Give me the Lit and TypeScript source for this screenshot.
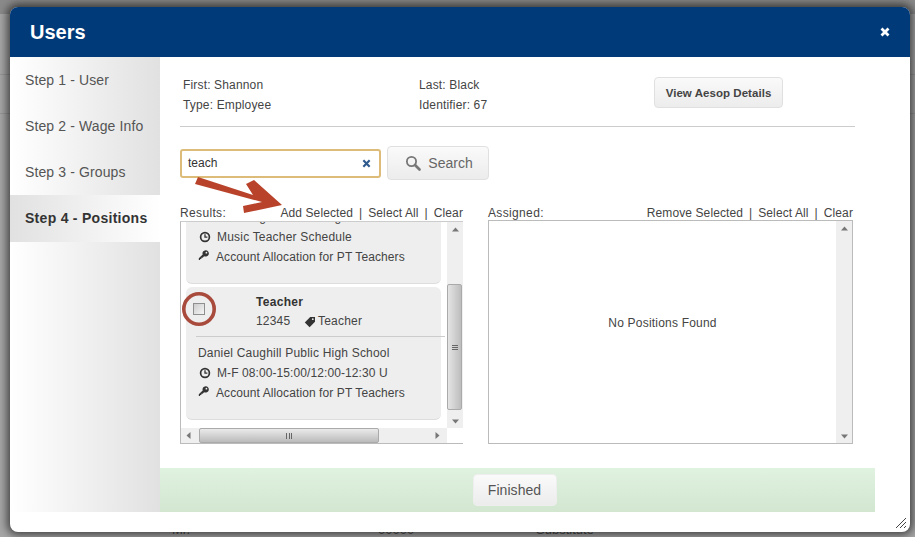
import { LitElement, html, css, svg } from "lit";
import { customElement } from "lit/decorators.js";

const clock = html`<svg class="ico" viewBox="0 0 12 12"><circle cx="6" cy="6" r="4.4" fill="none" stroke="#333" stroke-width="1.7"/><path d="M6 3.2V6.2H8.4" fill="none" stroke="#333" stroke-width="1.3"/></svg>`;
const key = html`<svg class="ico" viewBox="0 0 12 12"><path d="M7.6 1.2a3.2 3.2 0 1 1-1.5 6L4.6 8.7H3.4V10H2.1v1H.8V9.2l3.9-3.7a3.2 3.2 0 0 1 2.9-4.3z" fill="#333"/><circle cx="8.4" cy="3.7" r=".9" fill="#eee"/></svg>`;
const tag = html`<svg class="ico" viewBox="0 0 12 12"><path d="M6.2 1H11v4.8L5.6 11.2.8 6.4z" fill="#333"/><circle cx="8.8" cy="3.2" r=".9" fill="#eee"/></svg>`;
const tri = (d: string) => svg`<svg class="tri" viewBox="0 0 7 7"><path d="${d}" fill="#777"/></svg>`;

@customElement("app-root")
export class AppRoot extends LitElement {
  static styles = css`
    :host { display: block; width: 915px; height: 537px; position: relative; overflow: hidden;
      font-family: "Liberation Sans", Arial, sans-serif; font-size: 12px; color: #444; background: #a6a6a6; }
    .page { height: 537px; display: flex; flex-direction: column; }
    .topband { height: 14px; background: #8a8a8a; flex: none; }
    .pagerow { height: 39px; border-bottom: 1px solid #969696; flex: none; box-sizing: border-box; }
    .pagerow.first { height: 61px; }
    .pagefill { flex: 1; }
    .pagetext { display: flex; height: 14px; padding-left: 172px; color: #4c4c4c; font-size: 13px; line-height: 14px; }
    .pagetext span:nth-child(1) { width: 206px; }
    .pagetext span:nth-child(2) { width: 158px; }

    .modal { position: absolute; left: 10px; top: 7px; width: 900px; height: 525px; background: #fff;
      border-radius: 8px; box-shadow: 0 0 9px 3px rgba(0,0,0,.6); display: flex; flex-direction: column; overflow: hidden; }
    .head { height: 50px; flex: none; background: #003a78; color: #fff; display: flex; align-items: center;
      justify-content: space-between; padding: 0 20px; box-sizing: border-box; }
    .head h1 { margin: 0; font-size: 20px; font-weight: 700; }
    .close { display: block; width: 10px; height: 10px; }

    .body { flex: none; height: 455px; width: 865px; display: flex; }
    .side { width: 150px; flex: none; background: linear-gradient(90deg, #fff, #e1e1e1); }
    .step { height: 46px; padding-left: 15px; font-size: 14px; color: #555; display: flex; align-items: center; box-sizing: border-box; letter-spacing: .12px; }
    .step.active { height: 47px; padding-bottom: 2px; font-weight: 700; color: #333; letter-spacing: .28px; background: linear-gradient(90deg, #e1e1e1, #fff); }

    .main { flex: 1; display: flex; flex-direction: column; min-width: 0; }
    .content { flex: 1; padding: 0 20px; min-height: 0; }
    .info { height: 70px; border-bottom: 1px solid #ccc; width: 675px; display: grid; grid-template-columns: 236px 235px auto;
      box-sizing: border-box; padding: 18px 0 0 3px; line-height: 20px; letter-spacing: .16px; }
    .btn-cell { margin-top: 2px; }
    .btn { display: inline-flex; align-items: center; justify-content: center; box-sizing: border-box; border: 1px solid #e0e0e0;
      border-radius: 4px; background: linear-gradient(#fafafa, #ececec); color: #444; }
    .aesop { width: 129px; height: 31px; font-weight: 700; font-size: 11.5px; letter-spacing: .05px; }

    .search { display: flex; align-items: center; gap: 6px; margin-top: 19px; height: 34px; }
    .field { width: 201px; height: 29px; border: 2px solid #dcbc78; border-radius: 3px; box-sizing: border-box; display: flex;
      align-items: center; justify-content: space-between; padding: 0 8px 0 6px; background: #fff; color: #333; }
    .field svg { width: 9px; height: 9px; display: block; }
    .search-btn { width: 102px; height: 34px; gap: 7px; font-size: 14px; color: #666; padding-left: 2px; }
    .search-btn svg { width: 16px; height: 16px; }

    .panes { display: flex; margin-top: 26px; gap: 25px; }
    .pane { display: flex; flex-direction: column; }
    .pane.results { width: 283px; }
    .pane.assigned { width: 365px; }
    .label { display: flex; justify-content: space-between; height: 14px; line-height: 14px; margin-bottom: 1px; letter-spacing: .1px; }
    .name { letter-spacing: .35px; }
    .acts { display: flex; gap: 6px; }

    .rbox { height: 223px; border-left: 1px solid #bbb; border-bottom: 1px solid #bbb; border-top: 1px solid #ccc; box-sizing: border-box;
      display: grid; grid-template-columns: 266px 16px; grid-template-rows: 206px 15px; }
    .list { overflow: hidden; background: #fff; padding: 0 6px 0 5px; letter-spacing: .09px; }
    .cards { margin-top: -22px; display: flex; flex-direction: column; gap: 3px; }
    .card { background: #eee; border-radius: 6px; border-bottom: 1px solid #ddd; width: 255px; box-sizing: border-box; position: relative; }
    .card.one { height: 84px; padding: 7px 12px 0; }
    .card.two { height: 133px; }
    .cardhead { height: 49px; box-sizing: border-box; padding: 6px 0 0 70px; line-height: 19px; position: relative; }
    .cardhead b { display: block; color: #333; letter-spacing: .3px; }
    .meta { display: flex; align-items: center; letter-spacing: .2px; }
    .num { width: 48px; }
    .meta .ico { margin: 0 2px 0 0; }
    .check { position: absolute; left: 7px; top: 16px; width: 12px; height: 12px; box-sizing: border-box; border: 1px solid #8f8f8f;
      background: linear-gradient(135deg, #ccc, #f6f6f6); }
    .sep { height: 1px; background: #ccc; width: 249px; margin-left: 10px; position: relative; }
    .loc { padding: 6px 12px; }
    .line { height: 20px; line-height: 20px; white-space: nowrap; }
    .wide { letter-spacing: .2px; }
    .iconed { display: flex; align-items: center; gap: 6px; }
    .ico { width: 12px; height: 12px; flex: none; display: block; margin-left: 1px; }
    .keyed .ico { margin-left: 0; margin-top: -4px; }

    .vbar { background: #efefef; display: flex; flex-direction: column; align-items: center; }
    .arrow { height: 14px; display: flex; align-items: center; justify-content: center; flex: none; }
    .tri { width: 7px; height: 7px; display: block; flex: none; }
    .thumbv { width: 15px; height: 126px; margin: 48px 1px 0 0; background: linear-gradient(90deg, #e4e4e4, #bdbdbd); border: 1px solid #aaa;
      box-sizing: border-box; border-radius: 2px; display: flex; align-items: center; justify-content: center; }
    .grip-v { width: 6px; height: 5px; border-top: 1px solid #666; border-bottom: 1px solid #666; box-sizing: border-box; background: linear-gradient(transparent 1px, #666 1px, #666 2px, transparent 2px); }
    .spacer { flex: 1; }
    .hbar { background: #efefef; display: flex; align-items: center; padding: 0 6px 0 4px; }
    .thumbh { width: 180px; height: 15px; margin-left: 7px; background: linear-gradient(#eaeaea, #bbb); border: 1px solid #aaa; box-sizing: border-box;
      border-radius: 2px; display: flex; align-items: center; justify-content: center; }
    .grip-h { width: 6px; height: 6px; border-left: 1px solid #666; border-right: 1px solid #666; box-sizing: border-box; background: linear-gradient(90deg, transparent 2px, #666 2px, #666 3px, transparent 3px); }
    .corner { background: #fff; }

    .abox { height: 224px; margin-top: -1px; border: 1px solid #bbb; box-sizing: border-box; display: flex; }
    .empty { flex: 1; display: flex; align-items: center; justify-content: center; padding-bottom: 18px; letter-spacing: .2px; }
    .avbar { width: 16px; background: #efefef; display: flex; flex-direction: column; justify-content: space-between; }

    .foot { height: 44px; flex: none; background: linear-gradient(#e0f2e0, #d2e6d0); display: flex; align-items: center; justify-content: center; }
    .finish { width: 84px; height: 32px; font-size: 14px; color: #555; border-color: #eee; margin-left: -6px; letter-spacing: .05px; }

    .resize { position: absolute; right: 3px; bottom: 3px; width: 12px; height: 12px; display: block; }
    .overlay { position: absolute; left: 0; top: 0; width: 915px; height: 537px; pointer-events: none; }
  `;

  render() {
    return html`
      <div class="page">
        <div class="topband"></div>
        <div class="pagerow first"></div>
        <div class="pagerow"></div>
        <div class="pagefill"></div>
        <div class="pagetext"><span>Mr.</span><span>00000</span><span>Substitute</span></div>
      </div>
      <div class="modal">
        <div class="head">
          <h1>Users</h1>
          <svg class="close" viewBox="0 0 10 10"><path d="M1.5 1.5l7 7M8.5 1.5l-7 7" stroke="#fff" stroke-width="2.8"/></svg>
        </div>
        <div class="body">
          <div class="side">
            <div class="step">Step 1 - User</div>
            <div class="step">Step 2 - Wage Info</div>
            <div class="step">Step 3 - Groups</div>
            <div class="step active">Step 4 - Positions</div>
          </div>
          <div class="main">
            <div class="content">
              <div class="info">
                <div>First: Shannon<br />Type: Employee</div>
                <div>Last: Black<br />Identifier: 67</div>
                <div class="btn-cell"><div class="btn aesop">View Aesop Details</div></div>
              </div>
              <div class="search">
                <div class="field">teach
                  <svg viewBox="0 0 10 10"><path d="M1.5 1.5l7 7M8.5 1.5l-7 7" stroke="#2f5a8e" stroke-width="2.4"/></svg>
                </div>
                <div class="btn search-btn">
                  <svg viewBox="0 0 16 16"><circle cx="6.5" cy="6.5" r="4.6" fill="none" stroke="#777" stroke-width="1.8"/><path d="M10 10l4.5 4.5" stroke="#777" stroke-width="2.6" stroke-linecap="round"/></svg>
                  Search
                </div>
              </div>
              <div class="panes">
                <div class="pane results">
                  <div class="label"><span class="name">Results:</span><span class="acts"><span>Add Selected</span><span>|</span><span>Select All</span><span>|</span><span>Clear</span></span></div>
                  <div class="rbox">
                    <div class="list"><div class="cards">
                      <div class="card one">
                        <div class="line wide">Daniel Caughill Public High School</div>
                        <div class="line iconed">${clock}<span class="wide">Music Teacher Schedule</span></div>
                        <div class="line iconed keyed">${key}<span>Account Allocation for PT Teachers</span></div>
                      </div>
                      <div class="card two">
                        <div class="cardhead"><b>Teacher</b><div class="meta"><span class="num">12345</span>${tag}<span>Teacher</span></div><div class="check"></div></div>
                        <div class="sep"></div>
                        <div class="loc">
                          <div class="line wide">Daniel Caughill Public High School</div>
                          <div class="line iconed">${clock}<span>M-F 08:00-15:00/12:00-12:30 U</span></div>
                          <div class="line iconed keyed">${key}<span>Account Allocation for PT Teachers</span></div>
                        </div>
                      </div>
                    </div></div>
                    <div class="vbar">
                      <div class="arrow">${tri("M3.5 1.5L7 5.5H0z")}</div>
                      <div class="thumbv"><div class="grip-v"></div></div>
                      <div class="spacer"></div>
                      <div class="arrow">${tri("M3.5 5.5L0 1.5H7z")}</div>
                    </div>
                    <div class="hbar">
                      ${tri("M1.5 3.5L5.5 0V7z")}
                      <div class="thumbh"><div class="grip-h"></div></div>
                      <div class="spacer"></div>
                      ${tri("M5.5 3.5L1.5 0V7z")}
                    </div>
                    <div class="corner"></div>
                  </div>
                </div>
                <div class="pane assigned">
                  <div class="label"><span class="name">Assigned:</span><span class="acts"><span>Remove Selected</span><span>|</span><span>Select All</span><span>|</span><span>Clear</span></span></div>
                  <div class="abox">
                    <div class="empty">No Positions Found</div>
                    <div class="avbar">
                      <div class="arrow">${tri("M3.5 1.5L7 5.5H0z")}</div>
                      <div class="arrow">${tri("M3.5 5.5L0 1.5H7z")}</div>
                    </div>
                  </div>
                </div>
              </div>
            </div>
            <div class="foot"><div class="btn finish">Finished</div></div>
          </div>
        </div>
        <svg class="resize" viewBox="0 0 12 12"><path d="M1 11L11 1M5 11L11 5M9 11L11 9" stroke="#444" stroke-width="1"/></svg>
      </div>
      <svg class="overlay" viewBox="0 0 915 537">
        <polygon points="198,177 253,195 246,184 254,180 282,205 244,213 243,206 262,202 195,184" fill="#b9432a"/>
        <circle cx="199" cy="309" r="15.2" fill="none" stroke="#a84a3c" stroke-width="3.6"/>
      </svg>
    `;
  }
}
